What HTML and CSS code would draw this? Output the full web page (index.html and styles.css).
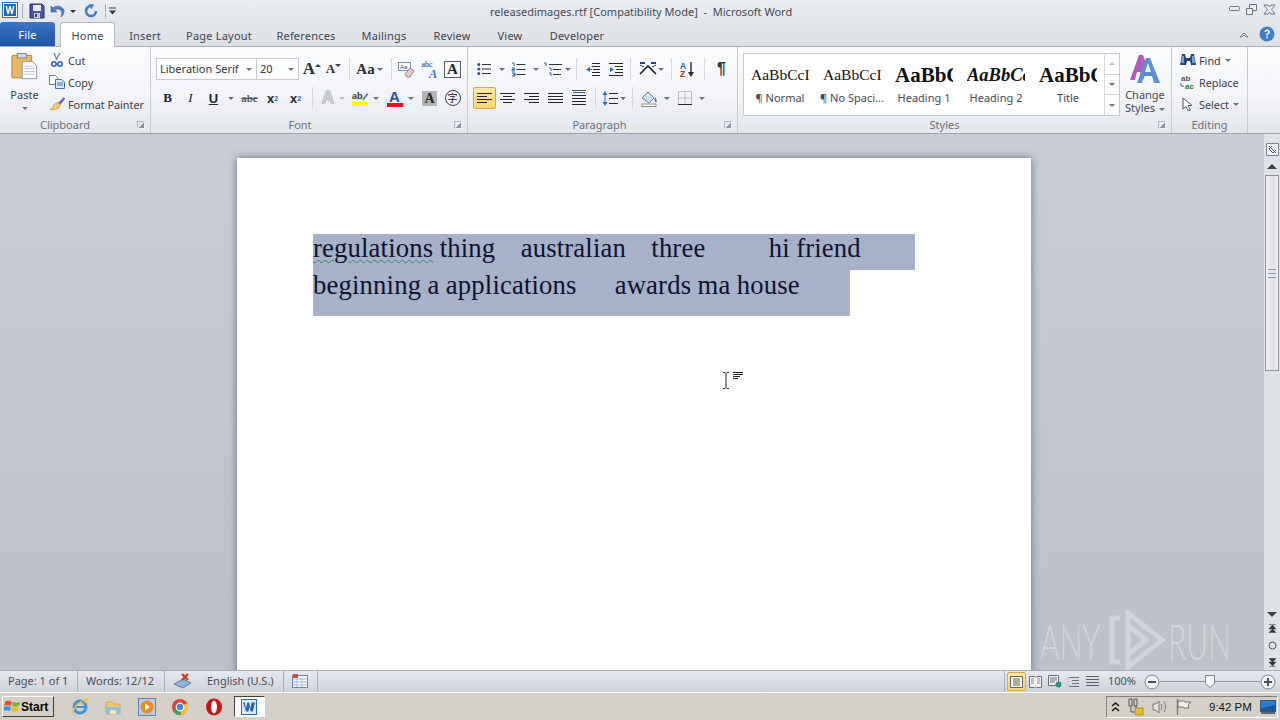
FILE: index.html
```html
<!DOCTYPE html>
<html lang="en">
<head>
  <meta charset="UTF-8" />
  <title>releasedimages.rtf [Compatibility Mode] - Microsoft Word</title>
  <link rel="stylesheet" href="styles.css">
</head>
<body>
  <!-- Title bar with quick access toolbar -->
  <div class="titlebar">
    <div class="qat">
      <svg class="word-icon" width="16" height="16" viewBox="0 0 16 16"><rect x=".5" y=".5" width="15" height="15" fill="#fff" stroke="#2a6fb5"/><rect x="2" y="2" width="12" height="12" fill="#2b66b3"/><path d="M3.5 4h1.6l1 5 1.2-5h1.4l1.2 5 1-5h1.5l-1.8 8H9.200L8 7l-1.200 5H5.300z" fill="#fff"/></svg>
      <span class="qat-sep"></span>
      <svg class="qat-save" width="16" height="16" viewBox="0 0 16 16"><path d="M1 1h12l2 2v12H1z" fill="#4a53a8" stroke="#2b2f78"/><rect x="4" y="2" width="8" height="6" fill="#e8ecf8"/><rect x="5" y="10" width="6" height="5" fill="#c4c9e0"/><rect x="6" y="11" width="2" height="3" fill="#3a4290"/></svg>
      <svg class="qat-undo" width="16" height="14" viewBox="0 0 16 14"><path d="M1 2v6h6L5 6c3-2 6-1 7 3l-1 4c4-3 4-8 0-10-3-1.500-6-1-8 1z" fill="#4c7fc0" stroke="#2f5c98" stroke-width=".6"/></svg>
      <span class="caret dark"></span>
      <svg class="qat-redo" width="14" height="14" viewBox="0 0 14 14"><path d="M7 2a5 5 0 1 0 5 5" fill="none" stroke="#3f7ec9" stroke-width="2.600"/><path d="M5 0l5 .5-2.500 5z" fill="#3f7ec9"/></svg>
      <span class="qat-sep second"></span>
      <svg class="qat-more" width="9" height="8" viewBox="0 0 9 8"><path d="M1 .5h7v1H1zM1 3.500h7L4.500 7.500z" fill="#2e3138"/></svg>
    </div>
    <div class="doc-title">releasedimages.rtf [Compatibility Mode]&nbsp; -&nbsp; Microsoft Word</div>
    <div class="window-buttons">
      <svg width="11" height="6" viewBox="0 0 11 6"><rect x=".5" y=".5" width="10" height="4" rx="1" fill="#eef0f3" stroke="#6c7280"/></svg>
      <svg width="11" height="11" viewBox="0 0 11 11"><path d="M3.500.5h7v6h-7z" fill="#eef0f3" stroke="#6c7280"/><path d="M.5 4.500h6v6h-6z" fill="#eef0f3" stroke="#6c7280"/></svg>
      <svg width="13" height="11" viewBox="0 0 13 11"><path d="M1 1l4 0 1.500 2L8 1h4L8.500 5.500 12 10H8L6.500 8 5 10H1l3.500-4.500z" fill="#eef0f3" stroke="#6c7280"/></svg>
    </div>
  </div>

  <!-- Ribbon tabs -->
  <div class="tabs">
    <div class="tab file">File</div>
    <div class="tab home">Home</div>
    <div class="tab t-insert">Insert</div>
    <div class="tab t-layout">Page Layout</div>
    <div class="tab t-refs">References</div>
    <div class="tab t-mail">Mailings</div>
    <div class="tab t-review">Review</div>
    <div class="tab t-view">View</div>
    <div class="tab t-dev">Developer</div>
    <div class="tab-help">
      <svg width="10" height="7" viewBox="0 0 10 7"><path d="M1 6l4-4 4 4H7L5 4 3 6z" fill="#fff" stroke="#5f6670" stroke-width=".8"/></svg>
      <svg width="16" height="16" viewBox="0 0 16 16"><circle cx="8" cy="8" r="7.500" fill="#3f7fc9"/><path d="M5.500 6c0-3.400 5.400-3.400 5.400 0 0 2-2.100 1.900-2.100 3.600H7.200c0-2.500 2-2.500 2-3.600 0-1.300-2-1.200-2 0z" fill="#fff"/><rect x="7.200" y="10.500" width="1.600" height="1.700" fill="#fff"/></svg>
    </div>
  </div>

  <!-- Ribbon -->
  <div class="ribbon">
    <div class="group clipboard">
      <div class="group-body clip-body">
        <div class="paste">
          <svg width="27" height="30" viewBox="0 0 30 32"><rect x="1" y="3" width="22" height="25" rx="1" fill="#eab766" stroke="#a87c3c"/><rect x="7" y="1" width="10" height="5" fill="#d8d8d8" stroke="#808080"/><path d="M12.500 10H24l4.500 4.500V29h-16z" fill="#fdfdfd" stroke="#8e939c"/><path d="M15 15h10M15 18h11M15 21h11M15 24h11" stroke="#b6bcc6"/></svg>
          <span class="paste-label">Paste</span>
          <span class="caret"></span>
        </div>
        <div class="small-col">
          <div class="small-btn">
            <svg width="14" height="14" viewBox="0 0 14 14"><path d="M4 0l3 7M10 0L6 7" stroke="#7c8794" stroke-width="1.400"/><circle cx="4" cy="11" r="2.200" fill="none" stroke="#2f62a8" stroke-width="1.500"/><circle cx="10" cy="11" r="2.200" fill="none" stroke="#2f62a8" stroke-width="1.500"/></svg>
            <span>Cut</span>
          </div>
          <div class="small-btn">
            <svg width="16" height="14" viewBox="0 0 16 14"><path d="M.5.500h6l2 2v7h-8z" fill="#fff" stroke="#5b82b8"/><path d="M6.500 4.500h6l3 2.500v6.500h-9z" fill="#dbe7f6" stroke="#3f6fb0"/><path d="M8 8h6M8 10h6" stroke="#3f6fb0"/></svg>
            <span>Copy</span>
          </div>
          <div class="small-btn">
            <svg width="16" height="14" viewBox="0 0 16 14"><path d="M15 0L9 6l2 2 5-6z" fill="#7a5db0"/><path d="M9 5l2.500 3-2 3.500L4 13 1 12c3 0 3-2 3.500-4z" fill="#eecb75" stroke="#a98a3a" stroke-width=".6"/></svg>
            <span>Format Painter</span>
          </div>
        </div>
      </div>
      <div class="group-label">Clipboard<span class="launcher"></span></div>
    </div>

    <div class="group font">
      <div class="group-body rows">
        <div class="row">
          <div class="combo name">Liberation Serif<span class="caret"></span></div>
          <div class="combo size">20<span class="caret"></span></div>
          <div class="tb w22 sp2 glyph serif">A<sup class="up"></sup></div>
          <div class="tb w21 glyph serif smaller">A<sup class="down"></sup></div>
          <span class="sep"></span>
          <div class="tb w29 glyph serif aa">Aa<span class="caret"></span></div>
          <span class="sep m73"></span>
          <div class="tb">
            <svg width="17" height="17" viewBox="0 0 17 17"><rect x=".5" y="1.500" width="12" height="8" fill="#fff" stroke="#7d8aa0"/><text x="2" y="8" class="svg-mini">Aa</text><path d="M7 13l5-6 4 3-4 6H9z" fill="#f2c9c2" stroke="#8a7f9f"/></svg>
          </div>
          <div class="tb">
            <div class="abc-stack"><span>abc</span><em>A</em></div>
          </div>
          <div class="tb">
            <div class="boxed-a">A</div>
          </div>
        </div>
        <div class="row">
          <div class="tb b-btn">B</div>
          <div class="tb i-btn">I</div>
          <div class="tb u-btn">U</div>
          <span class="caret-cell"><span class="caret"></span></span>
          <div class="tb strike sp2">abc</div>
          <div class="tb script">x<sub>2</sub></div>
          <div class="tb script">x<sup>2</sup></div>
          <span class="sep"></span>
          <div class="tb w18 sp1 effects">A</div>
          <span class="caret-cell small"><span class="caret pale"></span></span>
          <div class="tb sp2">
            <svg width="18" height="18" viewBox="0 0 18 18"><text x="1" y="10" class="svg-ab">ab</text><path d="M11 10l5-6 1.500 1.500-5 6z" fill="#6f86a8"/><rect x="1" y="13" width="16" height="4" fill="#ffff00"/></svg>
          </div>
          <span class="caret-cell mid"><span class="caret"></span></span>
          <div class="tb sp2 colour-a">
            <span class="colour-letter">A</span>
          </div>
          <span class="caret-cell small"><span class="caret"></span></span>
          <div class="tb sp3"><div class="shaded-a">A</div></div>
          <div class="tb"><div class="enclosed">字</div></div>
        </div>
      </div>
      <div class="group-label">Font<span class="launcher"></span></div>
    </div>

    <div class="group paragraph">
      <div class="group-body rows">
        <div class="row">
          <div class="tb">
            <svg width="15" height="14" viewBox="0 0 15 14"><path d="M5 2.500h9M5 7h9M5 11.500h9" stroke="#2e3138"/><circle cx="1.800" cy="2.500" r="1.500" fill="#27518f"/><circle cx="1.800" cy="7" r="1.500" fill="#27518f"/><circle cx="1.800" cy="11.500" r="1.500" fill="#27518f"/></svg>
          </div>
          <span class="caret-cell"><span class="caret"></span></span>
          <div class="tb">
            <svg width="15" height="15" viewBox="0 0 15 15"><path d="M5.500 2.500h9M5.500 7.500h9M5.500 12.500h9" stroke="#2e3138"/><path d="M1 1h2v3M1 6h2.500v1.500H1V9h3M1 11h3v1.500H2 4V14H1" fill="none" stroke="#2a5fa8"/></svg>
          </div>
          <span class="caret-cell"><span class="caret"></span></span>
          <div class="tb">
            <svg width="20" height="15" viewBox="0 0 20 15"><path d="M6 2.500h13M10 7.500h8M10 12.500h8" stroke="#2e3138"/><path d="M1 1h2v3M6 6h2v3M6 11h2v3" fill="none" stroke="#2a5fa8"/></svg>
          </div>
          <span class="caret-cell tight"><span class="caret"></span></span>
          <span class="sep m44"></span>
          <div class="tb">
            <svg width="16" height="15" viewBox="0 0 16 15"><path d="M7 1.500h8M7 4.500h8M8 7.500h7M7 10.500h8M7 13.500h8" stroke="#23262c"/><path d="M5 5L1 7.500 5 10z" fill="#2a6cc0"/><path d="M5 7.500h2" stroke="#2a6cc0"/></svg>
          </div>
          <div class="tb">
            <svg width="16" height="15" viewBox="0 0 16 15"><path d="M1 1.500h14M7 4.500h8M8 7.500h7M7 10.500h8M1 13.500h14" stroke="#23262c"/><path d="M2 5l4 2.500L2 10z" fill="#2a6cc0"/></svg>
          </div>
          <span class="sep m38"></span>
          <div class="tb w18">
            <svg width="18" height="14" viewBox="0 0 18 14"><path d="M1 12L9 4l8 8" fill="none" stroke="#1b1d22" stroke-width="1.600"/><path d="M1 1h5M12 1h5" stroke="#1d3f86" stroke-width="2"/><path d="M5 5L1 3M13 5l4-2" stroke="#1d3f86"/></svg>
          </div>
          <span class="caret-cell tight"><span class="caret"></span></span>
          <span class="sep m64"></span>
          <div class="tb">
            <svg width="15" height="17" viewBox="0 0 15 17"><text x="0" y="7.500" class="svg-az a">A</text><text x="0" y="16" class="svg-az z">Z</text><path d="M11 1v13" stroke="#23262c" stroke-width="1.400"/><path d="M8 11l3 5 3-5z" fill="#23262c"/></svg>
          </div>
          <span class="sep"></span>
          <div class="tb pilcrow">¶</div>
        </div>
        <div class="row">
          <div class="tb active">
            <svg width="15" height="13" viewBox="0 0 15 13"><path d="M0 1.500h15M0 4.500h10M0 7.500h15M0 10.500h10" stroke="#23262c"/></svg>
          </div>
          <div class="tb">
            <svg width="15" height="13" viewBox="0 0 15 13"><path d="M0 1.500h15M3 4.500h9M0 7.500h15M3 10.500h9" stroke="#23262c"/></svg>
          </div>
          <div class="tb sp1">
            <svg width="15" height="13" viewBox="0 0 15 13"><path d="M0 1.500h15M5 4.500h10M0 7.500h15M5 10.500h10" stroke="#23262c"/></svg>
          </div>
          <div class="tb sp1">
            <svg width="15" height="13" viewBox="0 0 15 13"><path d="M0 1.500h15M0 4.500h15M0 7.500h15M0 10.500h15" stroke="#23262c"/></svg>
          </div>
          <div class="tb">
            <svg width="16" height="16" viewBox="0 0 16 16"><path d="M1 .5h14" stroke="#555"/><path d="M2 2.500h12M5 2.500L2 2.500" stroke="#2a6cc0"/><path d="M1 5.500h14M1 8.500h14M1 11.500h14M1 14.500h14" stroke="#23262c"/></svg>
          </div>
          <span class="sep"></span>
          <div class="tb w18">
            <svg width="16" height="17" viewBox="0 0 16 17"><path d="M7 3.500h9M7 8.500h9M7 13.500h9" stroke="#23262c"/><path d="M3 1l2.500 4h-5zM3 16l2.500-4h-5z" fill="#2a6cc0"/><path d="M3 5v7" stroke="#2a6cc0"/></svg>
          </div>
          <span class="caret-cell tight"><span class="caret"></span></span>
          <span class="sep"></span>
          <div class="tb">
            <svg width="17" height="17" viewBox="0 0 17 17"><path d="M1 8l6-6 6 6-5 5z" fill="#cfe0f4" stroke="#6a7f9c"/><path d="M14 7c2 3 2 5 1 5s-2-2-1-5z" fill="#2a6cc0"/><rect x="1" y="14" width="14" height="2.500" fill="#fff" stroke="#8c8c8c"/></svg>
          </div>
          <span class="caret-cell"><span class="caret"></span></span>
          <div class="tb sp1">
            <svg width="14" height="14" viewBox="0 0 14 14"><path d="M.5.500h13v13H.5zM7 .5v13M.5 7h13" fill="none" stroke="#8a8f98" stroke-dasharray="1 1"/><path d="M0 13.500h14" stroke="#23262c"/></svg>
          </div>
          <span class="caret-cell"><span class="caret"></span></span>
        </div>
      </div>
      <div class="group-label">Paragraph<span class="launcher"></span></div>
    </div>

    <div class="group styles">
      <div class="group-body styles-body">
        <div class="gallery">
          <div class="style-item"><div class="sample">AaBbCcI</div><div class="style-name">¶ Normal</div></div>
          <div class="style-item"><div class="sample">AaBbCcI</div><div class="style-name">¶ No Spaci...</div></div>
          <div class="style-item"><div class="sample big">AaBbC</div><div class="style-name">Heading 1</div></div>
          <div class="style-item"><div class="sample big ital">AaBbCc</div><div class="style-name">Heading 2</div></div>
          <div class="style-item"><div class="sample big">AaBbC</div><div class="style-name">Title</div></div>
          <div class="gallery-scroll">
            <div><span class="caret up pale"></span></div>
            <div><span class="caret"></span></div>
            <div class="more"><span class="caret"></span></div>
          </div>
        </div>
        <div class="change-styles">
          <svg width="32" height="30" viewBox="0 0 32 30"><path d="M1 26L10 1h4l5 14-5 11-3-8H8l-2 8z" fill="#b05cb8"/><path d="M8 29L17 4h4l10 25h-6l-2-7h-8l-2 7z" fill="#5b8fd0"/><path d="M16 18h6l-3-9z" fill="#eef3fa"/></svg>
          <span>Change<br>Styles<span class="caret inline"></span></span>
        </div>
      </div>
      <div class="group-label">Styles<span class="launcher"></span></div>
    </div>

    <div class="group editing">
      <div class="group-body small-col edit-col">
        <div class="small-btn">
          <svg width="16" height="14" viewBox="0 0 16 14"><path d="M2 1h3l1 4h4l1-4h3l2 11h-5l-1-4H7l-1 4H0z" fill="#26457c"/><path d="M2 3h2v7H1zM12 3h2l1 7h-3z" fill="#7ea0cf"/></svg>
          <span>Find</span><span class="caret inline"></span>
        </div>
        <div class="small-btn">
          <svg width="16" height="15" viewBox="0 0 16 15"><text x="1" y="6" class="svg-rep">ab</text><text x="5" y="14" class="svg-rep green">ac</text><path d="M1 8v3h3" fill="none" stroke="#3568ac"/></svg>
          <span>Replace</span>
        </div>
        <div class="small-btn">
          <svg width="16" height="15" viewBox="0 0 16 15"><path d="M3 1v11l3-2.500L8.500 14l2-1L8 8.500h4z" fill="#fff" stroke="#4d5561"/></svg>
          <span>Select</span><span class="caret inline"></span>
        </div>
      </div>
      <div class="group-label">Editing</div>
    </div>
  </div>

  <!-- Document area -->
  <div class="workspace">
    <div class="doc-scroll">
      <div class="page">
        <div class="line first"><span class="squiggle">regulations</span> thing    australian    three          hi friend</div>
        <div class="line second">beginning a applications      awards ma house</div>
      </div>
    </div>
    <div class="scrollbar">
      <div class="sb-split"></div>
      <div class="sb-ruler">
        <svg width="13" height="13" viewBox="0 0 13 13"><path d="M.5.500h12v12H.5z" fill="#eef0f4" stroke="#7e848e"/><path d="M3 3l7 7M6 3L3 6l4 4 3-3" fill="none" stroke="#5b616b"/></svg>
      </div>
      <div class="sb-arrow"><span class="tri up"></span></div>
      <div class="sb-track">
        <div class="sb-thumb"><span class="grip"></span></div>
      </div>
      <div class="sb-arrow"><span class="tri"></span></div>
      <div class="sb-nav">
        <svg width="9" height="9" viewBox="0 0 9 9"><path d="M1 .5h7M1 5l3.500-4L8 5zM1 8.500l3.500-3.500L8 8.500z" fill="#30343b" stroke="#30343b" stroke-width=".5"/></svg>
        <svg width="9" height="9" viewBox="0 0 9 9"><circle cx="4.500" cy="4.500" r="3.500" fill="none" stroke="#4a4f57"/></svg>
        <svg width="9" height="9" viewBox="0 0 9 9"><path d="M1 8.500h7M1 4l3.500 4L8 4zM1 .5L4.500 4 8 .5z" fill="#30343b" stroke="#30343b" stroke-width=".5"/></svg>
      </div>
    </div>
    <div class="watermark">
      <span class="wm-text">ANY</span>
      <svg class="wm-logo" width="58" height="60" viewBox="0 0 58 60"><path d="M12 8H4v44h8M20 3l34 27-34 27zM20 16l18 14-18 14" fill="none" stroke="#fff" stroke-opacity=".3" stroke-width="5"/></svg>
      <span class="wm-text">RUN</span>
    </div>
    <div class="ibeam">
      <svg width="22" height="18" viewBox="0 0 22 18"><path d="M2 .5h2l1 1 1-1h2M5 1.500v14M2 16.500h2l1-1 1 1h2" fill="none" stroke="#222"/><path d="M12 .5h10M12 2.500h10M12 4.500h7M12 6.500h5" stroke="#222"/></svg>
    </div>
  </div>

  <!-- Status bar -->
  <div class="statusbar">
    <div class="st-cell page-no">Page: 1 of 1</div>
    <div class="st-cell words">Words: 12/12</div>
    <div class="st-cell proof">
      <svg width="20" height="16" viewBox="0 0 20 16"><path d="M1 11l9-5 8 4-8 5z" fill="#8fb1dc" stroke="#5a78a8"/><path d="M9 1l6 6M15 1L9 7" stroke="#d23c2c" stroke-width="2.400"/></svg>
      <span>English (U.S.)</span>
    </div>
    <div class="st-cell macro">
      <svg width="16" height="14" viewBox="0 0 16 14"><rect x=".5" y="1.500" width="15" height="12" fill="#fff" stroke="#6d86ad"/><path d="M1 5h14M1 8h14M1 11h14M5 5v8M10 5v8" stroke="#9db4d4"/><rect x="1" y="0" width="5" height="4" fill="#d9473f"/></svg>
    </div>
    <div class="st-right">
      <div class="views">
        <div class="view active"><svg width="13" height="12" viewBox="0 0 13 12"><path d="M.5.500h12v11H.5z" fill="#fff8dc" stroke="#5a5f68"/><path d="M3 3h7M3 5h7M3 7h7M3 9h7" stroke="#5a5f68"/></svg></div>
        <div class="view"><svg width="13" height="12" viewBox="0 0 13 12"><path d="M.5.500h5l1 1 1-1h5v11h-5l-1-1-1 1h-5z" fill="#f2f4f7" stroke="#6a7079"/><path d="M2 3h3M2 5h3M2 7h3M8 3h3M8 5h3M8 7h3" stroke="#8b9099"/></svg></div>
        <div class="view"><svg width="14" height="13" viewBox="0 0 14 13"><path d="M.5.500h10v10H.5z" fill="#f2f4f7" stroke="#6a7079"/><path d="M2 3h7M2 5h7M2 7h5" stroke="#6a7079"/><circle cx="10.500" cy="9.500" r="3" fill="#2f8f7f"/></svg></div>
        <div class="view"><svg width="13" height="12" viewBox="0 0 13 12"><path d="M2 1.500h10M5 4.500h7M5 7.500h7M2 10.500h10" stroke="#6a7079"/><path d="M0 3h2M0 6h2M0 9h2" stroke="#b3b7be"/></svg></div>
        <div class="view"><svg width="13" height="11" viewBox="0 0 13 11"><path d="M0 .5h13M0 3.500h13M0 6.500h13M0 9.500h13" stroke="#5a5f68"/></svg></div>
      </div>
      <div class="zoom-pct">100%</div>
      <svg class="zoom-btn" width="16" height="16" viewBox="0 0 16 16"><circle cx="8" cy="8" r="7" fill="#f0f2f5" stroke="#7d838d"/><path d="M4 8h8" stroke="#4a4f57" stroke-width="2"/></svg>
      <div class="zoom-track"><svg class="thumb" width="10" height="13" viewBox="0 0 10 13"><path d="M.5.500h9v8L5 12.500.5 8.500z" fill="#f5f6f8" stroke="#7d838d"/></svg></div>
      <svg class="zoom-btn" width="16" height="16" viewBox="0 0 16 16"><circle cx="8" cy="8" r="7" fill="#f0f2f5" stroke="#7d838d"/><path d="M4 8h8M8 4v8" stroke="#4a4f57" stroke-width="2"/></svg>
    </div>
  </div>

  <!-- Windows taskbar -->
  <div class="taskbar">
    <div class="start">
      <svg width="17" height="15" viewBox="0 0 17 15"><path d="M1 3c3-2 4-1 7 0L7 7C4 6 3 6 0 7z" fill="#e2552a"/><path d="M9 3c3 1 4 1 7 0l-1 4c-3 1-4 1-7 0z" fill="#79b530"/><path d="M0 8c3-1 4-1 7 0l-1 4c-3-1-4-1-7 0z" fill="#3c8fd8"/><path d="M8 8c3 1 4 1 7 0l-1 4c-3 1-4 1-7 0z" fill="#f2bc1a"/></svg>
      <span>Start</span>
    </div>
    <div class="task-icons">
      <div class="task-icon"><svg width="18" height="18" viewBox="0 0 18 18"><circle cx="9" cy="9" r="6" fill="none" stroke="#3b94d9" stroke-width="3"/><path d="M5 9h9" stroke="#3b94d9" stroke-width="2"/><path d="M1 15C3 8 10 2 17 1c-2 2-3 3-4 4" fill="none" stroke="#f0c238" stroke-width="1.200"/></svg></div>
      <div class="task-icon"><svg width="18" height="18" viewBox="0 0 18 18"><path d="M2 4h6l2 2h6v10H2z" fill="#efca6a" stroke="#b8923a" stroke-width=".6"/><path d="M2 9h14v7H2z" fill="#8fc0dc"/><path d="M6 16v-4h6v4" fill="#f7e7b5"/></svg></div>
      <div class="task-icon"><svg width="18" height="18" viewBox="0 0 18 18"><rect x=".5" y=".5" width="17" height="17" fill="#b9cde4" stroke="#5d83b5"/><circle cx="9" cy="9" r="6.500" fill="#ef8a1d"/><path d="M7 5.500l5 3.500-5 3.500z" fill="#fff"/></svg></div>
      <div class="task-icon"><svg width="18" height="18" viewBox="0 0 18 18"><circle cx="9" cy="9" r="8" fill="#d94436"/><path d="M9 9L2 13a8 8 0 0 0 8 4z" fill="#3aa757"/><path d="M9 9l1 8a8 8 0 0 0 6-12z" fill="#f5c02c"/><circle cx="9" cy="9" r="3.800" fill="#4a87dc" stroke="#fff" stroke-width="1.200"/></svg></div>
      <div class="task-icon"><svg width="18" height="18" viewBox="0 0 18 18"><ellipse cx="9" cy="9" rx="8" ry="8.500" fill="#cc1018"/><ellipse cx="9" cy="9" rx="3" ry="6.500" fill="#fff"/></svg></div>
      <div class="task-btn"><svg width="16" height="16" viewBox="0 0 16 16"><rect x=".5" y=".5" width="15" height="15" fill="#dbe8f7" stroke="#2a6fb5"/><path d="M2 3.500h1.800l1.200 6 1.400-6h1.600l1.400 6 1.200-6H14l-2.200 9H9.800L8.500 8l-1.200 4.500H5.200z" fill="#2660ae"/></svg></div>
    </div>
    <div class="tray">
      <svg width="9" height="10" viewBox="0 0 9 10"><path d="M1 4l3.500-3L8 4M1 9l3.500-3L8 9" fill="none" stroke="#111" stroke-width="1.400"/></svg>
      <svg width="16" height="18" viewBox="0 0 16 18"><path d="M1 1h3v7H1zM6 1h3v7H6zM3 8v6h4M8 8v3" fill="none" stroke="#555"/><rect x="7" y="10" width="8" height="7" fill="#e8bd2a" stroke="#8d6f10" stroke-width=".6"/></svg>
      <svg width="16" height="14" viewBox="0 0 16 14"><path d="M1 4h3l3-3v12l-3-3H1z" fill="#e8e6e0" stroke="#777"/><path d="M9 4c1 2 1 4 0 6M12 2c2 3 2 7 0 10" fill="none" stroke="#777"/></svg>
      <svg width="16" height="16" viewBox="0 0 16 16"><path d="M1.500 0v16" stroke="#777" stroke-width="1.400"/><path d="M2 2h6l1 1h6l-3 3 1 3H8L7 8H2z" fill="#eeece6" stroke="#777"/></svg>
      <span class="clock">9:42 PM</span>
      <svg class="tray-desktop" width="16" height="14" viewBox="0 0 16 14"><rect x=".5" y=".5" width="15" height="11" fill="#2a7fd0" stroke="#31587f"/><path d="M1 8l14-3v6H1z" fill="#175a9e"/><rect x="1" y="12" width="14" height="2" fill="#5a6a7a"/></svg>
    </div>
  </div>
</body>
</html>
```

FILE: styles.css
```css
/* Global Styles */
html, body {
  margin: 0;
  padding: 0;
}
body {
  width: 1280px;
  height: 720px;
  overflow: hidden;
  font-family: "Noto Sans", sans-serif;
  font-size: 11px;
  color: #3c4046;
  display: flex;
  flex-direction: column;
  background: #d4d0c8;
}
svg {
  display: block;
  flex: none;
}
/* Small dropdown triangle used all over the ribbon */
.caret {
  display: inline-block;
  width: 0;
  height: 0;
  border-left: 3px solid transparent;
  border-right: 3px solid transparent;
  border-top: 3px solid #6a6f78;
}
.caret.dark {
  border-top-color: #2e3138;
}
.caret.pale {
  border-top-color: #b5b9c0;
}
.caret.up {
  border-top: none;
  border-bottom: 3px solid #b5b9c0;
}
.caret.inline {
  margin-left: 4px;
  vertical-align: middle;
}

/* Title bar */
.titlebar {
  height: 22px;
  flex: none;
  display: flex;
  align-items: center;
  position: relative;
  background: linear-gradient(#eaeef3, #e3e7ec);
}
.qat {
  display: flex;
  align-items: center;
  padding-left: 2px;
}
.word-icon {
  margin-top: -3px;
}
.qat-sep {
  width: 1px;
  height: 14px;
  background: #a9aeb6;
  margin-left: 4px;
}
.qat-sep.second {
  margin-left: 7px;
}
.qat-save {
  margin-left: 6px;
}
.qat-undo {
  margin-left: 5px;
}
.qat .caret {
  margin-left: 4px;
}
.qat-redo {
  margin-left: 8px;
}
.qat-more {
  margin-left: 2px;
}
.doc-title {
  position: absolute;
  left: 490px;
  top: 4px;
  white-space: nowrap;
  line-height: 16px;
  font-size: 11px;
  color: #44484f;
}
.window-buttons {
  margin-left: auto;
  display: flex;
  align-items: center;
  gap: 6px;
  padding-right: 4px;
  margin-top: -4px;
}

/* Tabs */
.tabs {
  height: 24px;
  flex: none;
  display: flex;
  align-items: flex-end;
  background: linear-gradient(#e3e7ec, #dde1e6);
  border-bottom: 1px solid #a8adb5;
  box-sizing: content-box;
}
.tab {
  height: 24px;
  line-height: 27px;
  text-align: center;
  font-size: 11px;
  letter-spacing: .2px;
  color: #3f434a;
  flex: none;
}
.tab.file {
  width: 55px;
  line-height: 26px;
  background: linear-gradient(#3b75c4, #1f55a4);
  color: #fff;
  border-radius: 3px 3px 0 0;
}
.tab.home {
  width: 55px;
  margin-left: 5px;
  margin-bottom: -1px;
  height: 25px;
  line-height: 26px;
  background: #fff;
  border: 1px solid #b4b8bf;
  border-bottom: none;
  border-radius: 3px 3px 0 0;
  box-sizing: border-box;
}
.t-insert { width: 60px; }
.t-layout { width: 88px; }
.t-refs { width: 86px; }
.t-mail { width: 70px; }
.t-review { width: 66px; }
.t-view { width: 50px; }
.t-dev { width: 84px; }
.tab-help {
  margin-left: auto;
  display: flex;
  align-items: center;
  gap: 10px;
  height: 24px;
  padding-right: 5px;
}

/* Ribbon */
.ribbon {
  height: 86px;
  flex: none;
  display: flex;
  background: linear-gradient(#fbfcfd 0%, #f2f4f7 55%, #e3e7ec 100%);
  border-bottom: 1px solid #9fa4ac;
}
.group {
  flex: none;
  display: flex;
  flex-direction: column;
  border-right: 1px solid #c6cad1;
  box-sizing: border-box;
}
.group-body {
  height: 70px;
  box-sizing: border-box;
}
.group-label {
  height: 16px;
  line-height: 15px;
  text-align: center;
  color: #6b6f76;
  position: relative;
}
.launcher {
  position: absolute;
  right: 5px;
  top: 4px;
  width: 6px;
  height: 6px;
  border: 1px solid #b4b8bf;
  border-right-color: #eef0f3;
  border-bottom-color: #eef0f3;
  background: linear-gradient(135deg, transparent 55%, #8e939c 55%);
}
.clipboard { width: 151px; }
.font { width: 317px; }
.paragraph { width: 270px; }
.styles { width: 434px; }
.editing { width: 76px; }
.clipboard .group-label { padding-right: 20px; }
.font .group-label { padding-right: 18px; }
.paragraph .group-label { padding-right: 6px; }
.styles .group-label { padding-right: 20px; }

.clip-body {
  display: flex;
  padding-left: 8px;
}
.paste {
  width: 33px;
  display: flex;
  flex-direction: column;
  align-items: center;
  padding-top: 5px;
}
.paste-label {
  margin-top: 6px;
  line-height: 14px;
  color: #3c4046;
}
.paste .caret {
  margin-top: 5px;
}
.small-col {
  display: flex;
  flex-direction: column;
  margin-left: 8px;
  padding-top: 2px;
  font-size: 10.800px;
}
.small-btn {
  height: 22px;
  display: flex;
  align-items: center;
  white-space: nowrap;
}
.small-btn svg {
  width: 16px;
  margin-right: 3px;
}
.edit-col {
  margin-left: 8px;
}

/* Two row groups (Font, Paragraph) */
.rows {
  display: flex;
  flex-direction: column;
  gap: 7px;
  padding: 11px 0 0 5px;
}
.row {
  height: 22px;
  display: flex;
  align-items: center;
}
.combo {
  height: 22px;
  line-height: 20px;
  box-sizing: border-box;
  border: 1px solid #c6cad1;
  background: #fff;
  padding-left: 3px;
  color: #33363b;
  position: relative;
  white-space: nowrap;
}
.combo .caret {
  position: absolute;
  right: 4px;
  top: 9px;
}
.combo.name { width: 101px; }
.combo.size { width: 43px; margin-left: -1px; }
.tb {
  width: 23px;
  height: 22px;
  flex: none;
  display: flex;
  align-items: center;
  justify-content: center;
  box-sizing: border-box;
  color: #23262c;
}
.tb.w18 { width: 18px; }
.tb.w21 { width: 21px; }
.tb.w22 { width: 22px; }
.tb.w29 { width: 29px; }
.sp1 { margin-left: 1px; }
.sp2 { margin-left: 2px; }
.sp3 { margin-left: 3px; }
.tb.active {
  background: linear-gradient(#fde9a8, #fbd66f);
  border: 1px solid #d9a93f;
  border-radius: 2px;
}
.sep {
  width: 1px;
  height: 22px;
  flex: none;
  background: #d5d8de;
  margin: 0 5px;
}
.sep.m73 { margin: 0 3px 0 7px; }
.sep.m44 { margin: 0 4px; }
.sep.m38 { margin: 0 8px 0 3px; }
.sep.m64 { margin: 0 4px 0 6px; }
.caret-cell {
  width: 11px;
  flex: none;
  display: flex;
  align-items: center;
  justify-content: center;
}
.caret-cell.mid { width: 10px; }
.caret-cell.small { width: 9px; }
.caret-cell.tight { width: 8px; }
.glyph.serif {
  font-family: "Liberation Serif", serif;
  font-weight: bold;
  font-size: 17px;
  color: #2a2d33;
}
.glyph.smaller { font-size: 13px; }
.glyph.aa {
  font-size: 15px;
  gap: 2px;
}
.glyph sup {
  width: 0;
  height: 0;
  border-left: 3px solid transparent;
  border-right: 3px solid transparent;
  margin-bottom: 8px;
}
.glyph sup.up { border-bottom: 3px solid #3a3d44; }
.glyph sup.down { border-top: 3px solid #3a3d44; }
.abc-stack {
  display: flex;
  flex-direction: column;
  align-items: flex-start;
  width: 16px;
}
.abc-stack span {
  font: 8px/8px "Liberation Serif", serif;
  color: #333;
}
.abc-stack em {
  font: italic bold 13px/9px "Liberation Serif", serif;
  color: #3d78c8;
  align-self: flex-end;
}
.boxed-a {
  width: 15px;
  height: 15px;
  line-height: 15px;
  text-align: center;
  border: 1px solid #555a63;
  font: bold 15px/15px "Liberation Serif", serif;
}
.b-btn {
  font: bold 13px "Liberation Serif", serif;
}
.i-btn {
  font: italic 13px "Liberation Serif", serif;
}
.u-btn {
  font: bold 13px "Liberation Sans", sans-serif;
  text-decoration: underline;
}
.strike {
  font: bold 11px "Liberation Serif", serif;
  text-decoration: line-through;
  color: #55585f;
}
.script {
  font: bold 13px "Liberation Sans", sans-serif;
}
.script sub, .script sup {
  font-size: 7px;
  color: #2a5fa8;
}
.effects {
  font: bold 17px "Liberation Sans", sans-serif;
  color: #dfe1e5;
  -webkit-text-stroke: 1px #b3b6bc;
}
.colour-letter {
  font: bold 15px/13px "Liberation Sans", sans-serif;
  color: #2a4f9c;
  border-bottom: 4px solid #e8101c;
  width: 16px;
  text-align: center;
}
.shaded-a {
  width: 15px;
  height: 15px;
  background: #b4b4b4;
  text-align: center;
  font: bold 14px/15px "Liberation Serif", serif;
}
.enclosed {
  width: 14px;
  height: 14px;
  border: 1.500px solid #3a3d44;
  border-radius: 50%;
  font: 10px/14px "Noto Sans CJK SC", sans-serif;
  text-align: center;
}
.pilcrow {
  font: bold 16px "Liberation Sans", sans-serif;
  color: #33363b;
}
.svg-mini { font: 6px "Liberation Sans", sans-serif; fill: #26457c; }
.svg-ab { font: bold 9px "Liberation Sans", sans-serif; fill: #333; }
.svg-az { font: bold 8.500px "Liberation Sans", sans-serif; }
.svg-az.a { fill: #2a5fa8; }
.svg-az.z { fill: #a53a2a; }
.svg-rep { font: bold 8px "Liberation Sans", sans-serif; fill: #555; }
.svg-rep.green { fill: #1c7a3a; }

/* Styles gallery */
.styles-body {
  display: flex;
  padding: 6px 0 0 5px;
}
.gallery {
  width: 377px;
  height: 63px;
  box-sizing: border-box;
  border: 1px solid #c6cad1;
  background: #fff;
  display: flex;
}
.style-item {
  width: 72px;
  flex: none;
  text-align: center;
  overflow: hidden;
  box-sizing: border-box;
}
.sample {
  height: 36px;
  line-height: 42px;
  font-family: "Liberation Serif", serif;
  font-size: 15.500px;
  color: #111;
  white-space: nowrap;
  text-align: left;
  width: 58px;
  margin-left: 7px;
  overflow: hidden;
}
.sample.big {
  font-size: 21px;
  font-weight: bold;
}
.sample.ital {
  font-size: 18.500px;
  font-style: italic;
}
.style-name {
  line-height: 16px;
  margin-top: 0;
  color: #44484f;
  white-space: nowrap;
}
.gallery-scroll {
  margin-left: auto;
  width: 14px;
  border-left: 1px solid #d5d8de;
  display: flex;
  flex-direction: column;
}
.gallery-scroll div {
  flex: 1;
  border-bottom: 1px solid #d5d8de;
  display: flex;
  align-items: center;
  justify-content: center;
}
.gallery-scroll div:last-child {
  border-bottom: none;
}
.change-styles {
  width: 50px;
  display: flex;
  flex-direction: column;
  align-items: center;
  text-align: center;
  line-height: 13px;
  margin-top: -5px;
  padding-top: 6px;
  color: #44484f;
}
.change-styles svg {
  margin-bottom: 4px;
}

/* Document */
.workspace {
  flex: 1;
  min-height: 0;
  display: flex;
  position: relative;
  overflow: hidden;
}
.doc-scroll {
  flex: 1;
  overflow: hidden;
  background: linear-gradient(#c8ccd4, #bcc1c9);
  padding: 24px 0 0 237px;
}
.page {
  width: 794px;
  height: 900px;
  background: #fff;
  box-shadow: 0 0 8px rgba(40, 44, 52, .55);
  box-sizing: border-box;
  padding: 76px 0 0 76px;
  font-family: "Liberation Serif", serif;
  font-size: 26.670px;
  letter-spacing: .17px;
  word-spacing: -.5px;
  color: #0c1230;
}
.line {
  white-space: pre;
  background: #a7b1c9;
  overflow: hidden;
}
.line.first {
  width: 602px;
  height: 36px;
  line-height: 29px;
}
.line.second {
  width: 537px;
  height: 46px;
  line-height: 31px;
}
.squiggle {
  text-decoration: underline wavy #2f8a5f 1px;
  text-underline-offset: 2px;
}
.scrollbar {
  width: 16px;
  flex: none;
  background: #dfe2e7;
  display: flex;
  flex-direction: column;
  align-items: center;
}
.sb-split {
  height: 9px;
  width: 100%;
  flex: none;
}
.sb-ruler {
  height: 16px;
  flex: none;
}
.sb-arrow {
  height: 15px;
  width: 100%;
  flex: none;
  display: flex;
  align-items: center;
  justify-content: center;
}
.tri {
  width: 0;
  height: 0;
  border-left: 5px solid transparent;
  border-right: 5px solid transparent;
  border-top: 5px solid #3c4047;
}
.tri.up {
  border-top: none;
  border-bottom: 5px solid #3c4047;
}
.sb-track {
  flex: 1;
  width: 100%;
  padding-top: 1px;
  box-sizing: border-box;
}
.sb-thumb {
  width: 14px;
  height: 196px;
  margin: 0 auto;
  box-sizing: border-box;
  border: 1px solid #8e939c;
  background: linear-gradient(90deg, #eef0f4, #dfe2e8 60%, #eef0f4);
  display: flex;
  align-items: center;
  justify-content: center;
}
.grip {
  width: 8px;
  height: 7px;
  border-top: 1px solid #8e939c;
  border-bottom: 1px solid #8e939c;
  background: linear-gradient(transparent 3px, #8e939c 3px, #8e939c 4px, transparent 4px);
}
.sb-nav {
  height: 48px;
  flex: none;
  box-sizing: border-box;
  padding-top: 2px;
  display: flex;
  flex-direction: column;
  align-items: center;
  gap: 8px;
}
.watermark {
  position: absolute;
  left: 1040px;
  top: 476px;
  display: flex;
  align-items: center;
  gap: 8px;
}
.wm-logo {
  margin-right: -6px;
}
.wm-text {
  display: inline-block;
  font: 300 30px/60px "Lato", sans-serif;
  color: rgba(255, 255, 255, .32);
  transform: scaleY(1.65);
}
.ibeam {
  position: absolute;
  left: 721px;
  top: 238px;
}

/* Status bar */
.statusbar {
  height: 22px;
  flex: none;
  display: flex;
  align-items: center;
  background: linear-gradient(#e6e9ee, #cdd2d9);
  border-top: 1px solid #a8adb5;
  box-sizing: border-box;
  color: #4a4e55;
}
.st-cell {
  height: 100%;
  display: flex;
  align-items: center;
  border-right: 1px solid #a9aeb6;
  box-sizing: border-box;
  flex: none;
  padding-left: 8px;
  padding-bottom: 2px;
}
.page-no { width: 78px; }
.words { width: 87px; }
.proof { width: 119px; gap: 14px; }
.macro { width: 34px; padding-left: 8px; }
.st-right {
  margin-left: auto;
  display: flex;
  align-items: center;
  height: 100%;
  padding-right: 4px;
}
.views {
  display: flex;
  align-items: center;
  height: 100%;
  border-left: 1px solid #a9aeb6;
  padding-left: 2px;
}
.view {
  width: 19px;
  height: 19px;
  display: flex;
  align-items: center;
  justify-content: center;
  box-sizing: border-box;
}
.view.active {
  background: linear-gradient(#fde9a8, #fbd66f);
  border: 1px solid #d9a93f;
  border-radius: 2px;
}
.zoom-pct {
  width: 34px;
  text-align: right;
  margin-right: 8px;
  padding-bottom: 2px;
}
.zoom-track {
  width: 100px;
  height: 1px;
  background: #8e939c;
  display: flex;
  align-items: center;
  justify-content: center;
}

/* Taskbar */
.taskbar {
  height: 28px;
  flex: none;
  display: flex;
  align-items: center;
  background: #d4d0c8;
  border-top: 1px solid #fff;
  box-sizing: border-box;
}
.start {
  width: 52px;
  height: 21px;
  margin-left: 2px;
  display: flex;
  align-items: center;
  gap: 0;
  box-sizing: border-box;
  padding-left: 1px;
  background: #d4d0c8;
  border: 1px solid;
  border-color: #fff #404040 #404040 #fff;
  font: bold 12px "Liberation Sans", sans-serif;
  color: #000;
}
.task-icons {
  display: flex;
  align-items: center;
  margin-left: 9px;
}
.task-icon {
  width: 33.500px;
  display: flex;
  justify-content: center;
}
.task-btn {
  width: 31px;
  height: 21px;
  margin-left: 3px;
  display: flex;
  align-items: center;
  justify-content: center;
  background: #fff;
  border: 1px solid;
  border-color: #404040 #fff #fff #404040;
  box-sizing: border-box;
}
.tray {
  margin-left: auto;
  margin-right: 2px;
  width: 172px;
  height: 22px;
  display: flex;
  align-items: center;
  box-sizing: border-box;
  padding: 0 3px 0 4px;
  border: 1px solid;
  border-color: #808080 #fff #fff #808080;
  gap: 8px;
}
.clock {
  font: 11.500px "Liberation Sans", sans-serif;
  color: #111;
  margin-left: 9px;
  white-space: nowrap;
}
.tray-desktop {
  margin-left: auto;
}
```
